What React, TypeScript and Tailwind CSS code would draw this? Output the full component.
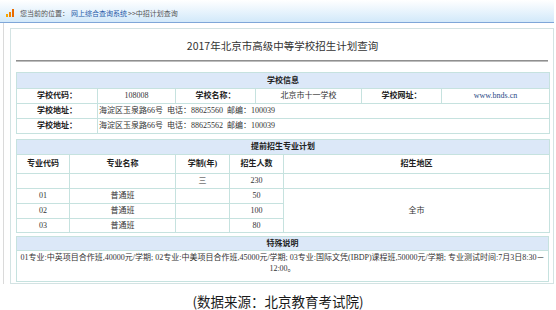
const cell = 'border border-[#c6e2df] p-0';
const head = 'border border-[#c6e2df] bg-[#dce8f8] p-0 font-bold text-[#222] text-center';

export default function App() {
  return (
    <div className="w-[556px] h-[310px] bg-white overflow-hidden">
      {/* Breadcrumb */}
      <div className="w-[554px] h-[23px] flex items-center pl-[6px] pt-[4px] bg-linear-to-b from-white to-[#d2e9fa] border-b border-[#7fa6d8] font-['Noto_Sans_CJK_SC',sans-serif] text-[7px] leading-none text-[#555]">
        <svg width="9" height="8" viewBox="0 0 9 8">
          <rect x="0" y="5" width="2" height="3" fill="#f7a600" />
          <rect x="3" y="3" width="2" height="5" fill="#f08300" />
          <rect x="6" y="0" width="2" height="8" fill="#e86a00" />
        </svg>
        <span className="ml-[5px]">您当前的位置：</span>
        <span className="text-[#2559a8] ml-[2px]">网上综合查询系统</span>
        <span className="ml-[1px]">&gt;&gt;中招计划查询</span>
      </div>

      <div className="ml-[3px] w-[551px] border-l border-[#dadada] pl-[6px] pt-[5px]">
        <div className="w-[544px] border border-[#d3e3e3] pl-[5px] pr-[4px] pb-[1px] font-['Liberation_Serif','Noto_Sans_CJK_SC',serif] text-[8px] text-[#333]">
          {/* Title */}
          <div className="h-[31px] flex items-center justify-center pt-[3px] font-['Noto_Sans_CJK_SC',sans-serif] text-[10.5px] text-[#333]">
            2017年北京市高级中等学校招生计划查询
          </div>
          <div className="w-[532px] h-[2px] bg-[#8f8f8f] border-b border-[#bdbdbd]" />

          {/* School info */}
          <table className="mt-[10px] w-[533px] table-fixed border-collapse leading-none">
            <colgroup>
              <col className="w-[81px]" />
              <col className="w-[78px]" />
              <col className="w-[80px]" />
              <col className="w-[106px]" />
              <col className="w-[80px]" />
              <col className="w-[108px]" />
            </colgroup>
            <tbody>
              <tr className="h-[16px]">
                <td colSpan={6} className={head}>学校信息</td>
              </tr>
              <tr className="h-[15px] text-center">
                <td className={`${cell} font-bold text-[#222]`}>学校代码：</td>
                <td className={cell}>108008</td>
                <td className={`${cell} font-bold text-[#222]`}>学校名称：</td>
                <td className={cell}>北京市十一学校</td>
                <td className={`${cell} font-bold text-[#222]`}>学校网址：</td>
                <td className={`${cell} text-[#2a4a86]`}>www.bnds.cn</td>
              </tr>
              <tr className="h-[15px]">
                <td className={`${cell} font-bold text-[#222] text-center`}>学校地址：</td>
                <td colSpan={5} className={`${cell} pl-[1px] whitespace-pre`}>
                  海淀区玉泉路66号  电话：88625560  邮编：100039
                </td>
              </tr>
              <tr className="h-[15px]">
                <td className={`${cell} font-bold text-[#222] text-center`}>学校地址：</td>
                <td colSpan={5} className={`${cell} pl-[1px] whitespace-pre`}>
                  海淀区玉泉路66号  电话：88625562  邮编：100039
                </td>
              </tr>
            </tbody>
          </table>

          {/* Plan */}
          <table className="mt-[5px] w-[533px] table-fixed border-collapse leading-none text-center">
            <colgroup>
              <col className="w-[53px]" />
              <col className="w-[106px]" />
              <col className="w-[54px]" />
              <col className="w-[54px]" />
              <col className="w-[266px]" />
            </colgroup>
            <tbody>
              <tr className="h-[15px]">
                <td colSpan={5} className={head}>提前招生专业计划</td>
              </tr>
              <tr className="h-[19px] font-bold text-[#222]">
                <td className={cell}>专业代码</td>
                <td className={cell}>专业名称</td>
                <td className={cell}>学制(年)</td>
                <td className={cell}>招生人数</td>
                <td className={cell}>招生地区</td>
              </tr>
              <tr className="h-[15px]">
                <td className={cell}></td>
                <td className={cell}></td>
                <td className={cell}>三</td>
                <td className={cell}>230</td>
                <td className={cell}></td>
              </tr>
              <tr className="h-[15px]">
                <td className={cell}>01</td>
                <td className={cell}>普通班</td>
                <td className={cell}></td>
                <td className={cell}>50</td>
                <td rowSpan={3} className={cell}>全市</td>
              </tr>
              <tr className="h-[15px]">
                <td className={cell}>02</td>
                <td className={cell}>普通班</td>
                <td className={cell}></td>
                <td className={cell}>100</td>
              </tr>
              <tr className="h-[14px]">
                <td className={cell}>03</td>
                <td className={cell}>普通班</td>
                <td className={cell}></td>
                <td className={cell}>80</td>
              </tr>
            </tbody>
          </table>

          {/* Notes */}
          <table className="mt-[3px] w-[533px] table-fixed border-collapse leading-none">
            <tbody>
              <tr className="h-[14px]">
                <td className={head}>特殊说明</td>
              </tr>
              <tr className="h-[31px]">
                <td className={`${cell} align-top text-center pt-[2px] leading-[10.5px] whitespace-nowrap`}>
                  01专业:中英项目合作班,40000元/学期; 02专业:中美项目合作班,45000元/学期; 03专业:国际文凭(IBDP)课程班,50000元/学期; 专业测试时间:7月3日8:30－
                  <br />
                  12:00。
                </td>
              </tr>
            </tbody>
          </table>
        </div>
      </div>

      {/* Caption */}
      <div className="h-[30px] flex items-center justify-center pt-[4px] font-['Noto_Sans_CJK_SC',sans-serif] text-[13.5px] text-[#1a1a1a]">
        (数据来源：北京教育考试院)
      </div>
    </div>
  );
}
